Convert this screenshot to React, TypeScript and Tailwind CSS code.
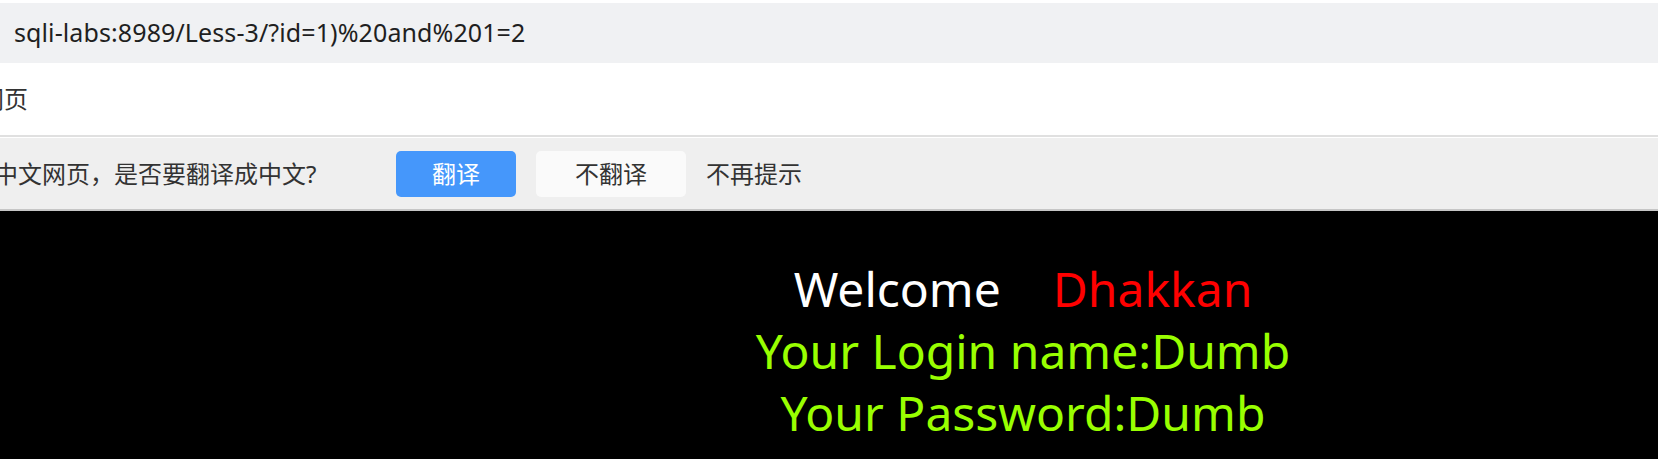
import { FC } from "react";

const cjk = "font-['Noto_Sans','Noto_Sans_CJK_SC',sans-serif]";

const App: FC = () => {
  return (
    <main className={`w-[1658px] h-[459px] overflow-hidden bg-black ${cjk}`}>
      {/* address bar */}
      <section className="bg-white pt-[3px]">
        <div className="h-[60px] bg-[#f0f1f3] flex items-center pl-[14px] text-[25px] tracking-[0.1px] text-[#1f1f1f]">
          sqli-labs:8989/Less-3/?id=1)%20and%201=2
        </div>
      </section>

      {/* bookmarks row */}
      <section className="h-[72px] bg-white flex items-center overflow-hidden">
        <span className="ml-[-20px] text-[24px] text-[#333] whitespace-nowrap">网页</span>
      </section>

      {/* translate bar */}
      <section className="border-t-2 border-[#e0e0e0] bg-white pt-px">
        <div className="h-[73px] bg-[#efefef] flex items-center border-b-2 border-[#c6c6c6] overflow-hidden whitespace-nowrap">
          <span className="ml-[-6px] w-[402px] shrink-0 text-[24px] text-[#333]">中文网页，是否要翻译成中文?</span>
          <button className="w-[120px] h-[46px] rounded-[5px] bg-[#4597fb] text-white text-[24px]">
            翻译
          </button>
          <button className="ml-5 w-[150px] h-[46px] rounded-[5px] bg-[#fafafa] text-[#333] text-[24px]">
            不翻译
          </button>
          <span className="ml-5 text-[24px] text-[#333]">不再提示</span>
        </div>
      </section>

      {/* page */}
      <section className="pl-[388px] pt-[47px] text-center text-[48px] leading-[62px]">
        <div>
          <span className="text-white">Welcome</span>
          <span className="ml-[52px] text-[#ff0000]">Dhakkan</span>
        </div>
        <div className="text-[#99ff00]">Your Login name:Dumb</div>
        <div className="text-[#99ff00]">Your Password:Dumb</div>
      </section>
    </main>
  );
};

export default App;
